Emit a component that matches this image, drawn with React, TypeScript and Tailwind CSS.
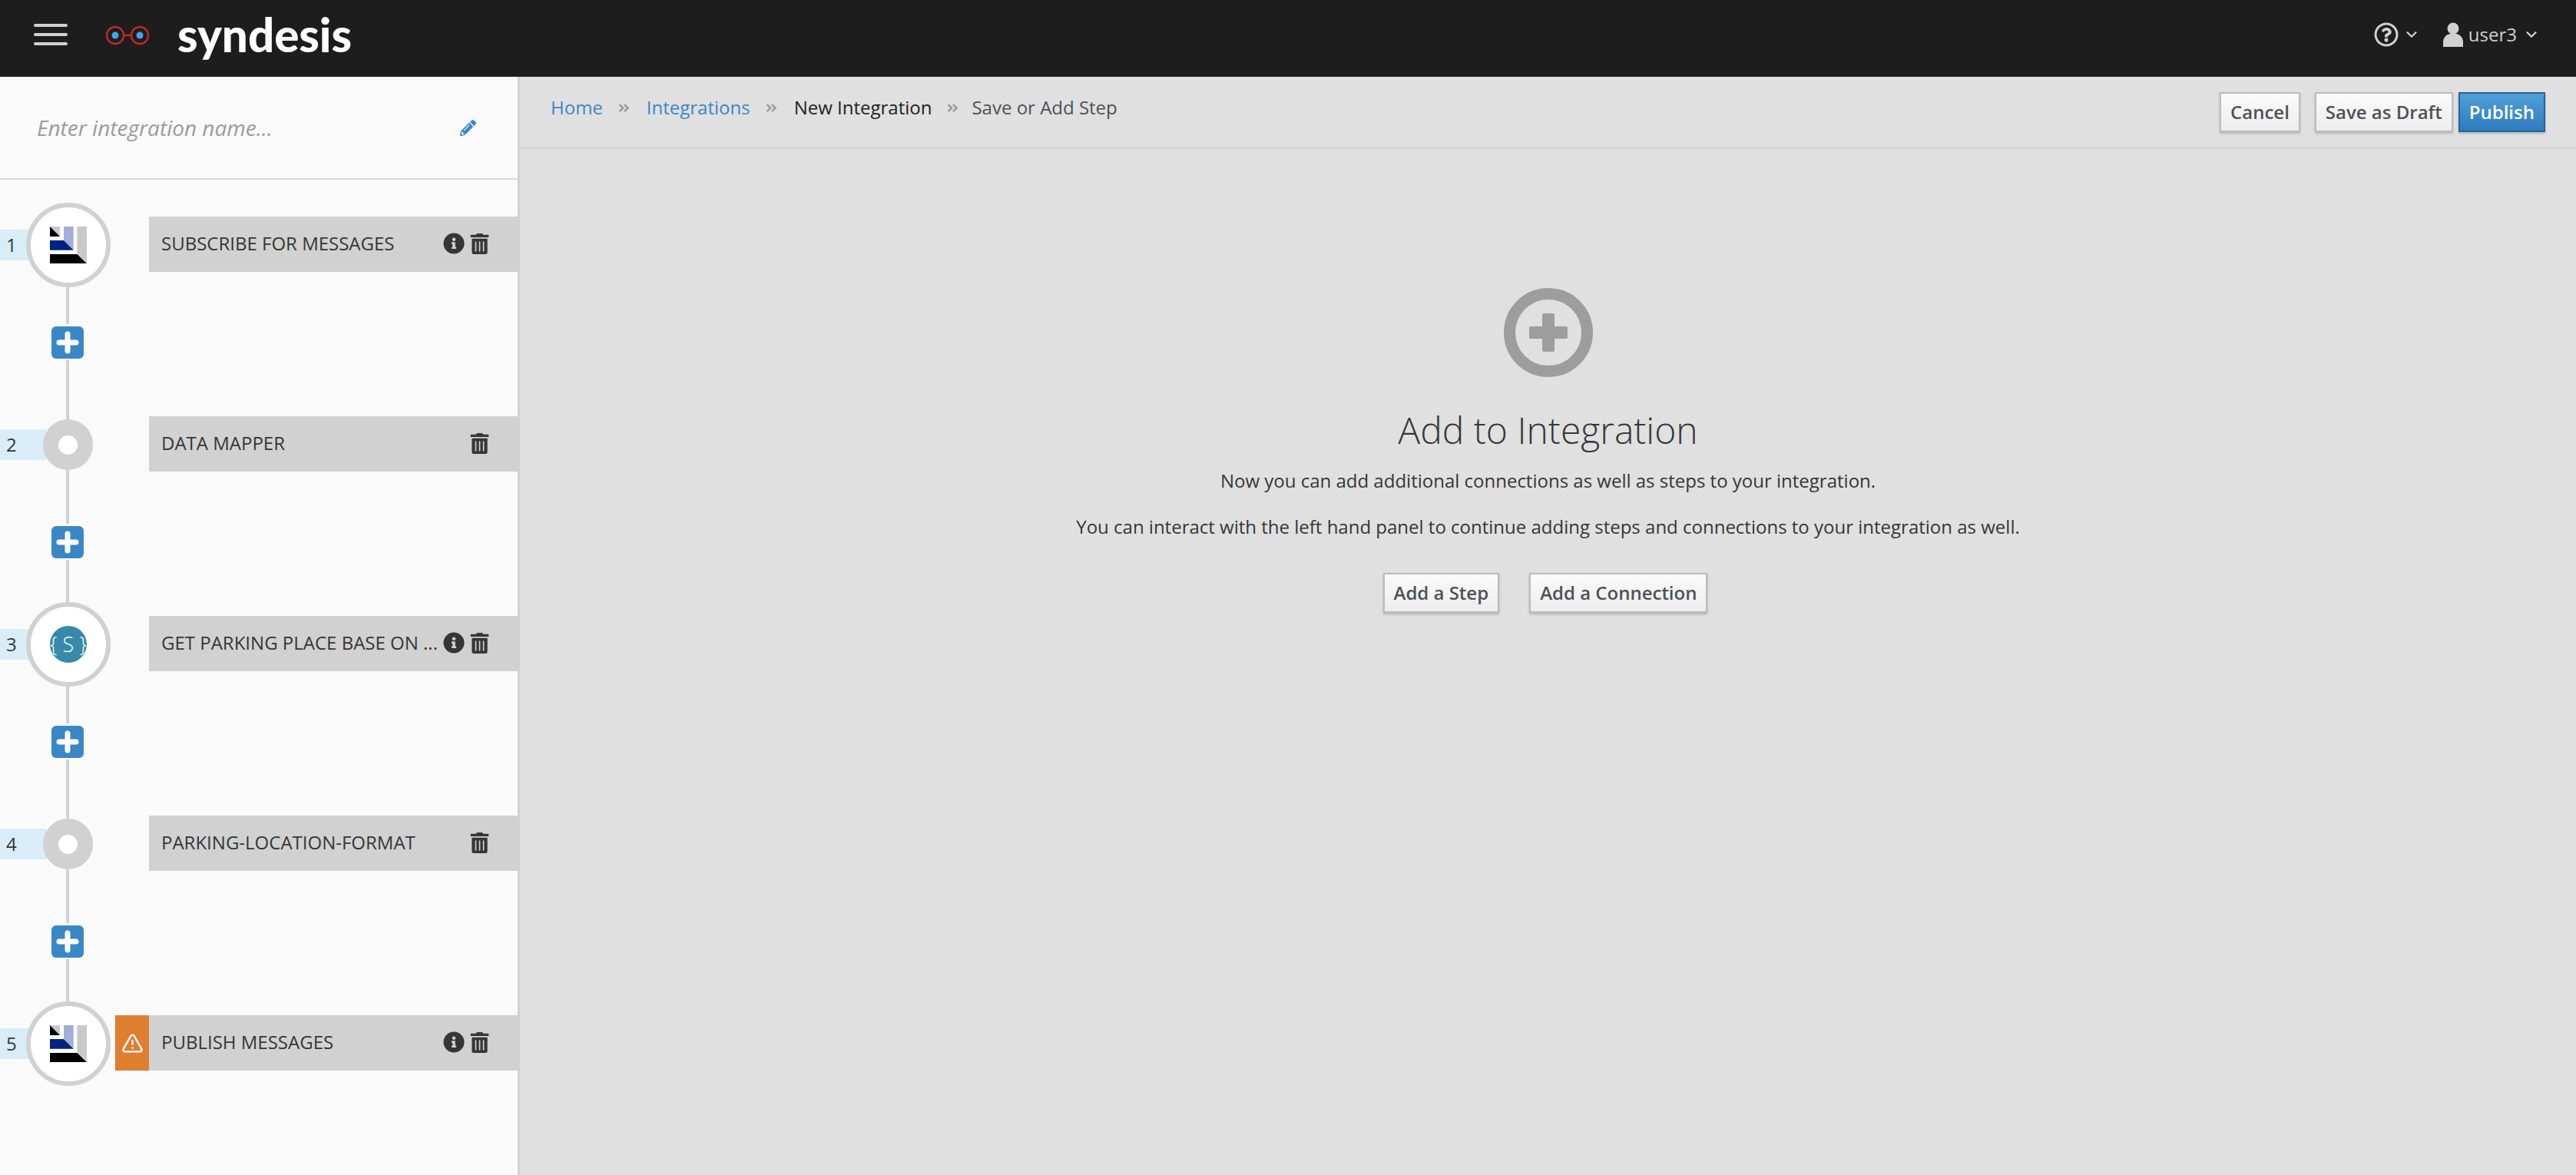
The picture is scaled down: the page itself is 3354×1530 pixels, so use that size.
import { ChevronDown, TriangleAlert } from "lucide-react";
import { FaAngleDoubleRight, FaInfoCircle, FaPencilAlt, FaRegQuestionCircle, FaTrashAlt } from "react-icons/fa";

type Step = { name: string; kind: "sf" | "dot" | "sql"; info?: boolean; warn?: boolean };

const steps: Step[] = [
  { name: "SUBSCRIBE FOR MESSAGES", kind: "sf", info: true },
  { name: "DATA MAPPER", kind: "dot" },
  { name: "GET PARKING PLACE BASE ON ...", kind: "sql", info: true },
  { name: "PARKING-LOCATION-FORMAT", kind: "dot" },
  { name: "PUBLISH MESSAGES", kind: "sf", info: true, warn: true },
];

function SalesforceIcon() {
  return (
    <svg viewBox="0 0 48 48" className="h-12 w-12">
      <polygon points="35.3,0 48,0 48,47 35.3,35" fill="#c9c9cb" />
      <polygon points="18,0 30.7,0 30.7,30.7 18,18" fill="#a3aed8" />
      <polygon points="0,18 18,18 30.7,30.7 0,30.7" fill="#00237f" />
      <polygon points="0,36 35.6,36 48,48 0,48" fill="#000000" />
      <polygon points="0,0 13,0 13,13" fill="#c9c9cb" />
      <polygon points="0,0 13,13 0,13" fill="#000000" />
    </svg>
  );
}

function AddButton() {
  return (
    <div className="h-[47px] w-[42px] bg-white flex items-center justify-center">
      <svg viewBox="0 0 42 42" className="h-[42px] w-[42px]">
        <rect width="42" height="42" rx="6" fill="#3a87c8" />
        <path d="M21 10v22M10 21h22" stroke="#ffffff" strokeWidth="7" strokeLinecap="round" />
      </svg>
    </div>
  );
}

function Node({ kind }: { kind: Step["kind"] }) {
  if (kind === "dot") {
    return (
      <div className="h-full -ml-[2px] flex flex-col items-center">
        <div className="flex-1 w-1 bg-[#d1d1d1]" />
        <div className="w-[65px] h-[66px] rounded-full bg-[#d1d1d1] flex items-center justify-center">
          <div className="w-[25px] h-[25px] rounded-full bg-white" />
        </div>
        <div className="flex-1 w-1 bg-[#d1d1d1]" />
      </div>
    );
  }
  return (
    <div className="w-[110px] h-[110px] rounded-full border-[6px] border-[#d1d1d1] bg-white flex items-center justify-center">
      {kind === "sf" ? (
        <SalesforceIcon />
      ) : (
        <div className="w-12 h-12 rounded-full bg-[#368aaa] flex items-center justify-center text-white font-light text-[27px] whitespace-nowrap">
          {"{ S }"}
        </div>
      )}
    </div>
  );
}

function StepRow({ step, index }: { step: Step; index: number }) {
  return (
    <div className="flex items-center h-[110px]">
      <div className="w-[60px] -mr-[26px] h-10 bg-[#d9edf9] pl-2 text-2xl leading-10 text-[#363636]">{index + 1}</div>
      <div className="relative w-[110px] h-full flex justify-center">
        <Node kind={step.kind} />
      </div>
      <div className={step.warn ? "ml-[6px] w-[44px] h-[72px] mb-[2px] bg-[#e07e30] flex items-center justify-center" : "ml-[50px]"}>
        {step.warn && <TriangleAlert size={29} color="#ffffff" strokeWidth={2} />}
      </div>
      <div className="flex-1 h-[72px] mb-[2px] bg-[#d1d1d1] pl-4 pb-[2px] flex items-center text-2xl text-[#363636]">
        <span className="flex-1 whitespace-nowrap">{step.name}</span>
        {step.info && <FaInfoCircle size={28} color="#363636" className="mr-[6px]" />}
        <FaTrashAlt size={27} color="#363636" className="mr-9" />
      </div>
    </div>
  );
}

function Connector() {
  return (
    <div className="ml-[34px] w-[108px] h-[150px] flex flex-col items-center">
      <div className="h-12 w-1 bg-[#d1d1d1]" />
      <AddButton />
      <div className="flex-1 w-1 bg-[#d1d1d1]" />
    </div>
  );
}

function Crumb({ className }: { className: string }) {
  return <FaAngleDoubleRight size={17} color="#9c9c9c" className={className} />;
}

const btn = "h-[52px] px-3 border-2 border-[#bbbbbb] bg-gradient-to-b from-[#fafafa] to-[#ededed] shadow-[0_2px_3px_rgba(0,0,0,0.2)] text-2xl font-semibold text-[#4d5258]";

export default function App() {
  return (
    <div className="h-screen flex flex-col overflow-hidden bg-[#e0e0e0] font-['Open_Sans',sans-serif] text-[#363636]">
      <header className="h-[100px] shrink-0 bg-[#1d1d1d] flex items-center">
        <div className="ml-[44px] w-11 flex flex-col gap-2 -mt-[10px]">
          <div className="h-1 rounded-sm bg-[#d1d1d1]" />
          <div className="h-1 rounded-sm bg-[#d1d1d1]" />
          <div className="h-1 rounded-sm bg-[#d1d1d1]" />
        </div>
        <svg viewBox="0 0 58 26" className="ml-[49px] w-[58px] h-[26px] -mt-[8px]">
          <circle cx="13" cy="13" r="11" fill="none" stroke="#c0291c" strokeWidth="2.5" />
          <circle cx="45" cy="13" r="11" fill="none" stroke="#c0291c" strokeWidth="2.5" />
          <path d="M24 13h10" stroke="#c0291c" strokeWidth="2.5" />
          <circle cx="13" cy="13" r="4.5" fill="#3fa4f0" />
          <circle cx="45" cy="13" r="4.5" fill="#3fa4f0" />
        </svg>
        <span className="ml-[36px] font-['Lato',sans-serif] font-black text-[60px] leading-none text-white -mt-[10px]">syndesis</span>
        <div className="ml-auto flex items-center text-[#d1d1d1] mr-[47px] -mt-[10px]">
          <FaRegQuestionCircle size={32} />
          <ChevronDown size={22} strokeWidth={2.5} className="ml-[6px]" />
          <svg viewBox="0 0 26 32" className="ml-[30px] w-[26px] h-[32px]">
            <circle cx="13" cy="8" r="7.5" fill="#d1d1d1" />
            <path d="M0 32v-6c0-6 4-10 9-11h8c5 1 9 5 9 11v6z" fill="#d1d1d1" />
          </svg>
          <span className="ml-[7px] text-2xl leading-none">user3</span>
          <ChevronDown size={22} strokeWidth={2.5} className="ml-[8px]" />
        </div>
      </header>

      <div className="flex flex-1 min-h-0">
        <aside className="w-[677px] shrink-0 bg-[#fafafa] border-r-[3px] border-[#d1d1d1]">
          <div className="h-[134px] border-b-2 border-[#d9d9d9] pl-12 pr-[54px] flex items-center justify-between">
            <span className="italic text-[28px] text-[#9a9a9a]">Enter integration name...</span>
            <FaPencilAlt size={21} color="#3a87c8" />
          </div>
          <div className="pt-[30px]">
            {steps.map((step, i) => (
              <div key={step.name}>
                <StepRow step={step} index={i} />
                {i < steps.length - 1 && <Connector />}
              </div>
            ))}
          </div>
        </aside>

        <main className="flex-1 flex flex-col">
          <div className="h-[94px] shrink-0 border-b-2 border-[#d1d1d1] pl-10 pr-10 flex items-start justify-between">
            <nav className="flex items-center h-[80px] text-2xl">
              <span className="text-[#3a87c8]">Home</span>
              <Crumb className="ml-[19px] mr-[21px]" />
              <span className="text-[#3a87c8]">Integrations</span>
              <Crumb className="ml-[19px] mr-[21px]" />
              <span className="text-[#222222]">New Integration</span>
              <Crumb className="ml-[19px] mr-[16px]" />
              <span className="text-[#4d5258]">Save or Add Step</span>
            </nav>
            <div className="flex items-center mt-5">
              <button className={btn}>Cancel</button>
              <button className={`${btn} ml-[19px]`}>Save as Draft</button>
              <button className="ml-[7px] h-[52px] px-3 border-2 border-[#25639e] bg-gradient-to-b from-[#4f9fd8] to-[#2f7cbf] shadow-[0_2px_3px_rgba(0,0,0,0.2)] text-2xl font-semibold text-white">Publish</button>
            </div>
          </div>

          <div className="flex flex-col items-center pt-[181px]">
            <div className="w-[116px] h-[116px] rounded-full border-[15px] border-[#9d9d9d] flex items-center justify-center">
              <svg viewBox="0 0 50 50" className="w-[50px] h-[50px]">
                <path d="M17 2a2 2 0 0 1 2-2h12a2 2 0 0 1 2 2v15h15a2 2 0 0 1 2 2v12a2 2 0 0 1-2 2H33v15a2 2 0 0 1-2 2H19a2 2 0 0 1-2-2V33H2a2 2 0 0 1-2-2V19a2 2 0 0 1 2-2h15z" fill="#9d9d9d" />
              </svg>
            </div>
            <h1 className="mt-[36px] text-[48px] font-light leading-[65px] text-[#363636]">Add to Integration</h1>
            <p className="mt-[18px] text-2xl leading-8">Now you can add additional connections as well as steps to your integration.</p>
            <p className="mt-[28px] text-2xl leading-8">You can interact with the left hand panel to continue adding steps and connections to your integration as well.</p>
            <div className="mt-[44px] pr-[7px] flex gap-[39px]">
              <button className={btn}>Add a Step</button>
              <button className={btn}>Add a Connection</button>
            </div>
          </div>
        </main>
      </div>
    </div>
  );
}
